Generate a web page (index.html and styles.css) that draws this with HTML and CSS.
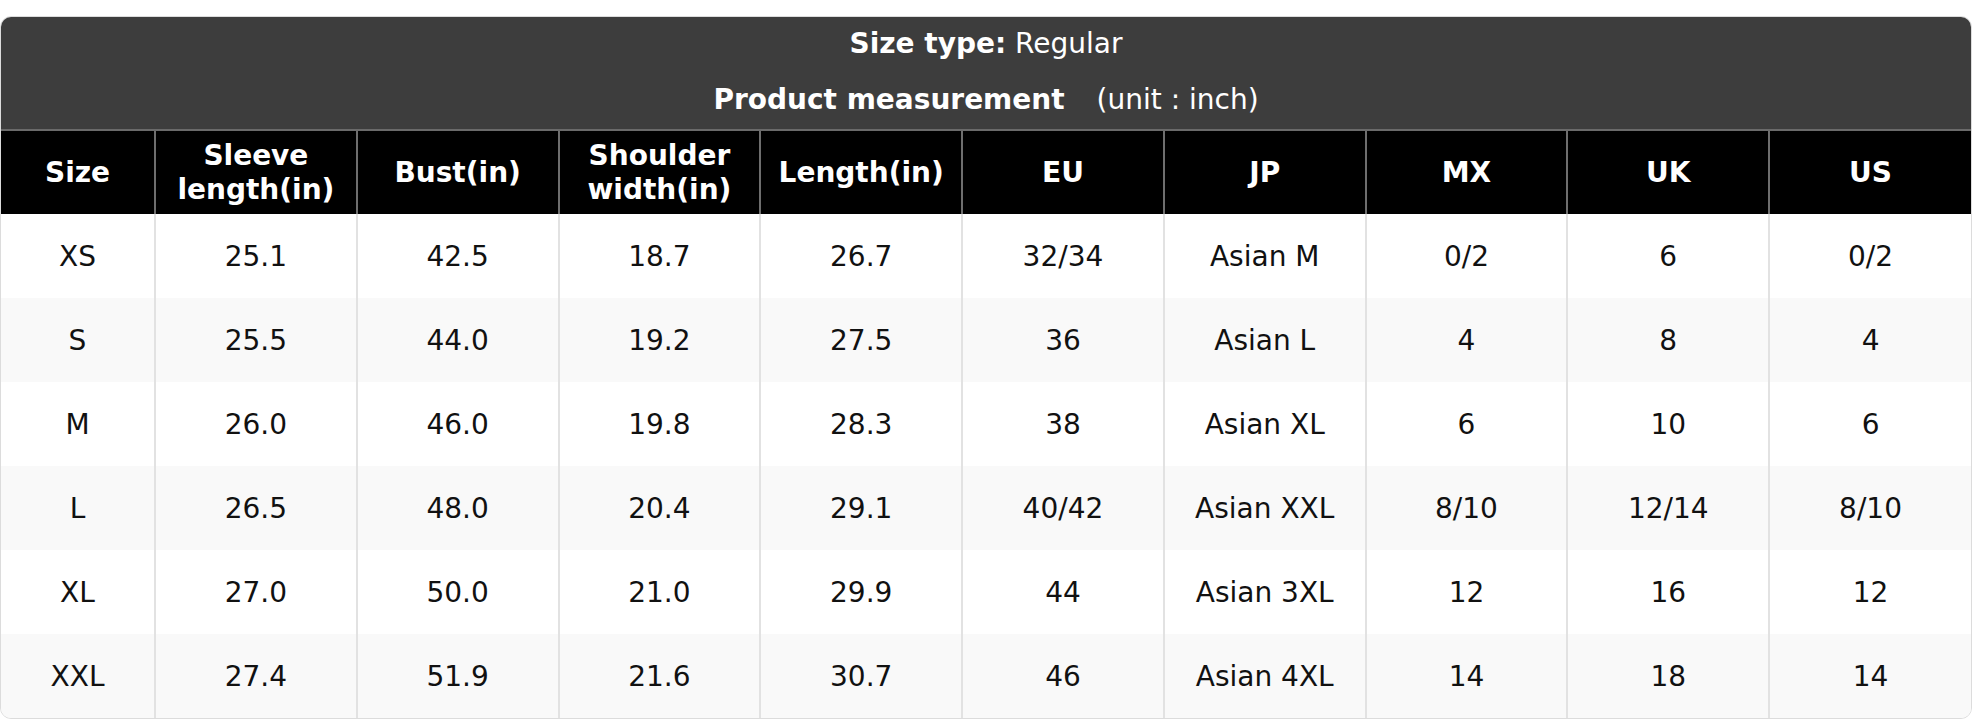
FILE: index.html
```html
<!DOCTYPE html>
<html lang="en">
<head>
<meta charset="utf-8">
<title>Size chart</title>
<link rel="stylesheet" href="styles.css">
</head>
<body>
<div class="chart">
  <table class="size-table">
    <colgroup>
      <col class="col-size">
      <col><col><col><col><col><col><col><col><col>
    </colgroup>
    <thead>
      <tr class="title-row">
        <th colspan="10">
          <div class="title-line"><b>Size type:</b> Regular</div>
          <div class="title-line"><b>Product measurement</b><span class="unit">(unit : inch)</span></div>
        </th>
      </tr>
      <tr class="head-row">
        <th>Size</th>
        <th>Sleeve<br>length(in)</th>
        <th>Bust(in)</th>
        <th>Shoulder<br>width(in)</th>
        <th>Length(in)</th>
        <th>EU</th>
        <th>JP</th>
        <th>MX</th>
        <th>UK</th>
        <th>US</th>
      </tr>
    </thead>
    <tbody>
      <tr><td>XS</td><td>25.1</td><td>42.5</td><td>18.7</td><td>26.7</td><td>32/34</td><td>Asian M</td><td>0/2</td><td>6</td><td>0/2</td></tr>
      <tr><td>S</td><td>25.5</td><td>44.0</td><td>19.2</td><td>27.5</td><td>36</td><td>Asian L</td><td>4</td><td>8</td><td>4</td></tr>
      <tr><td>M</td><td>26.0</td><td>46.0</td><td>19.8</td><td>28.3</td><td>38</td><td>Asian XL</td><td>6</td><td>10</td><td>6</td></tr>
      <tr><td>L</td><td>26.5</td><td>48.0</td><td>20.4</td><td>29.1</td><td>40/42</td><td>Asian XXL</td><td>8/10</td><td>12/14</td><td>8/10</td></tr>
      <tr><td>XL</td><td>27.0</td><td>50.0</td><td>21.0</td><td>29.9</td><td>44</td><td>Asian 3XL</td><td>12</td><td>16</td><td>12</td></tr>
      <tr><td>XXL</td><td>27.4</td><td>51.9</td><td>21.6</td><td>30.7</td><td>46</td><td>Asian 4XL</td><td>14</td><td>18</td><td>14</td></tr>
    </tbody>
  </table>
</div>
</body>
</html>
```
FILE: styles.css
```css
html, body {
  margin: 0;
  padding: 0;
  background: #ffffff;
}

body {
  padding-top: 16px;
  font-family: "DejaVu Sans", "Liberation Sans", sans-serif;
}

.chart {
  width: 1972px;
  box-sizing: border-box;
  border: 1px solid #dcdcdc;
  border-radius: 11px;
  overflow: hidden;
  background: #ffffff;
}

.size-table {
  width: 100%;
  border-collapse: collapse;
  table-layout: fixed;
}

.col-size {
  width: 154px;
}

.title-row th {
  background: #3d3d3d;
  color: #ffffff;
  padding: 0;
  font-weight: normal;
  border-bottom: 2px solid #6a6a6a;
}

.title-line {
  height: 56px;
  line-height: 54px;
  font-size: 28px;
  text-align: center;
}

.title-line b {
  font-weight: bold;
}

.unit {
  margin-left: 32px;
}

.head-row th {
  background: #000000;
  color: #ffffff;
  font-size: 28px;
  font-weight: bold;
  line-height: 34px;
  height: 84px;
  padding: 0 2px;
  box-sizing: border-box;
  text-align: center;
  vertical-align: middle;
  border-left: 2px solid #6e6e6e;
}

.head-row th:first-child {
  border-left: none;
}

tbody td {
  height: 84px;
  padding: 0 4px;
  box-sizing: border-box;
  font-size: 28px;
  color: #111111;
  text-align: center;
  vertical-align: middle;
  border-left: 2px solid #e2e2e2;
}

tbody td:first-child {
  border-left: none;
}

tbody tr:nth-child(even) td {
  background: #f9f9f9;
}
```
